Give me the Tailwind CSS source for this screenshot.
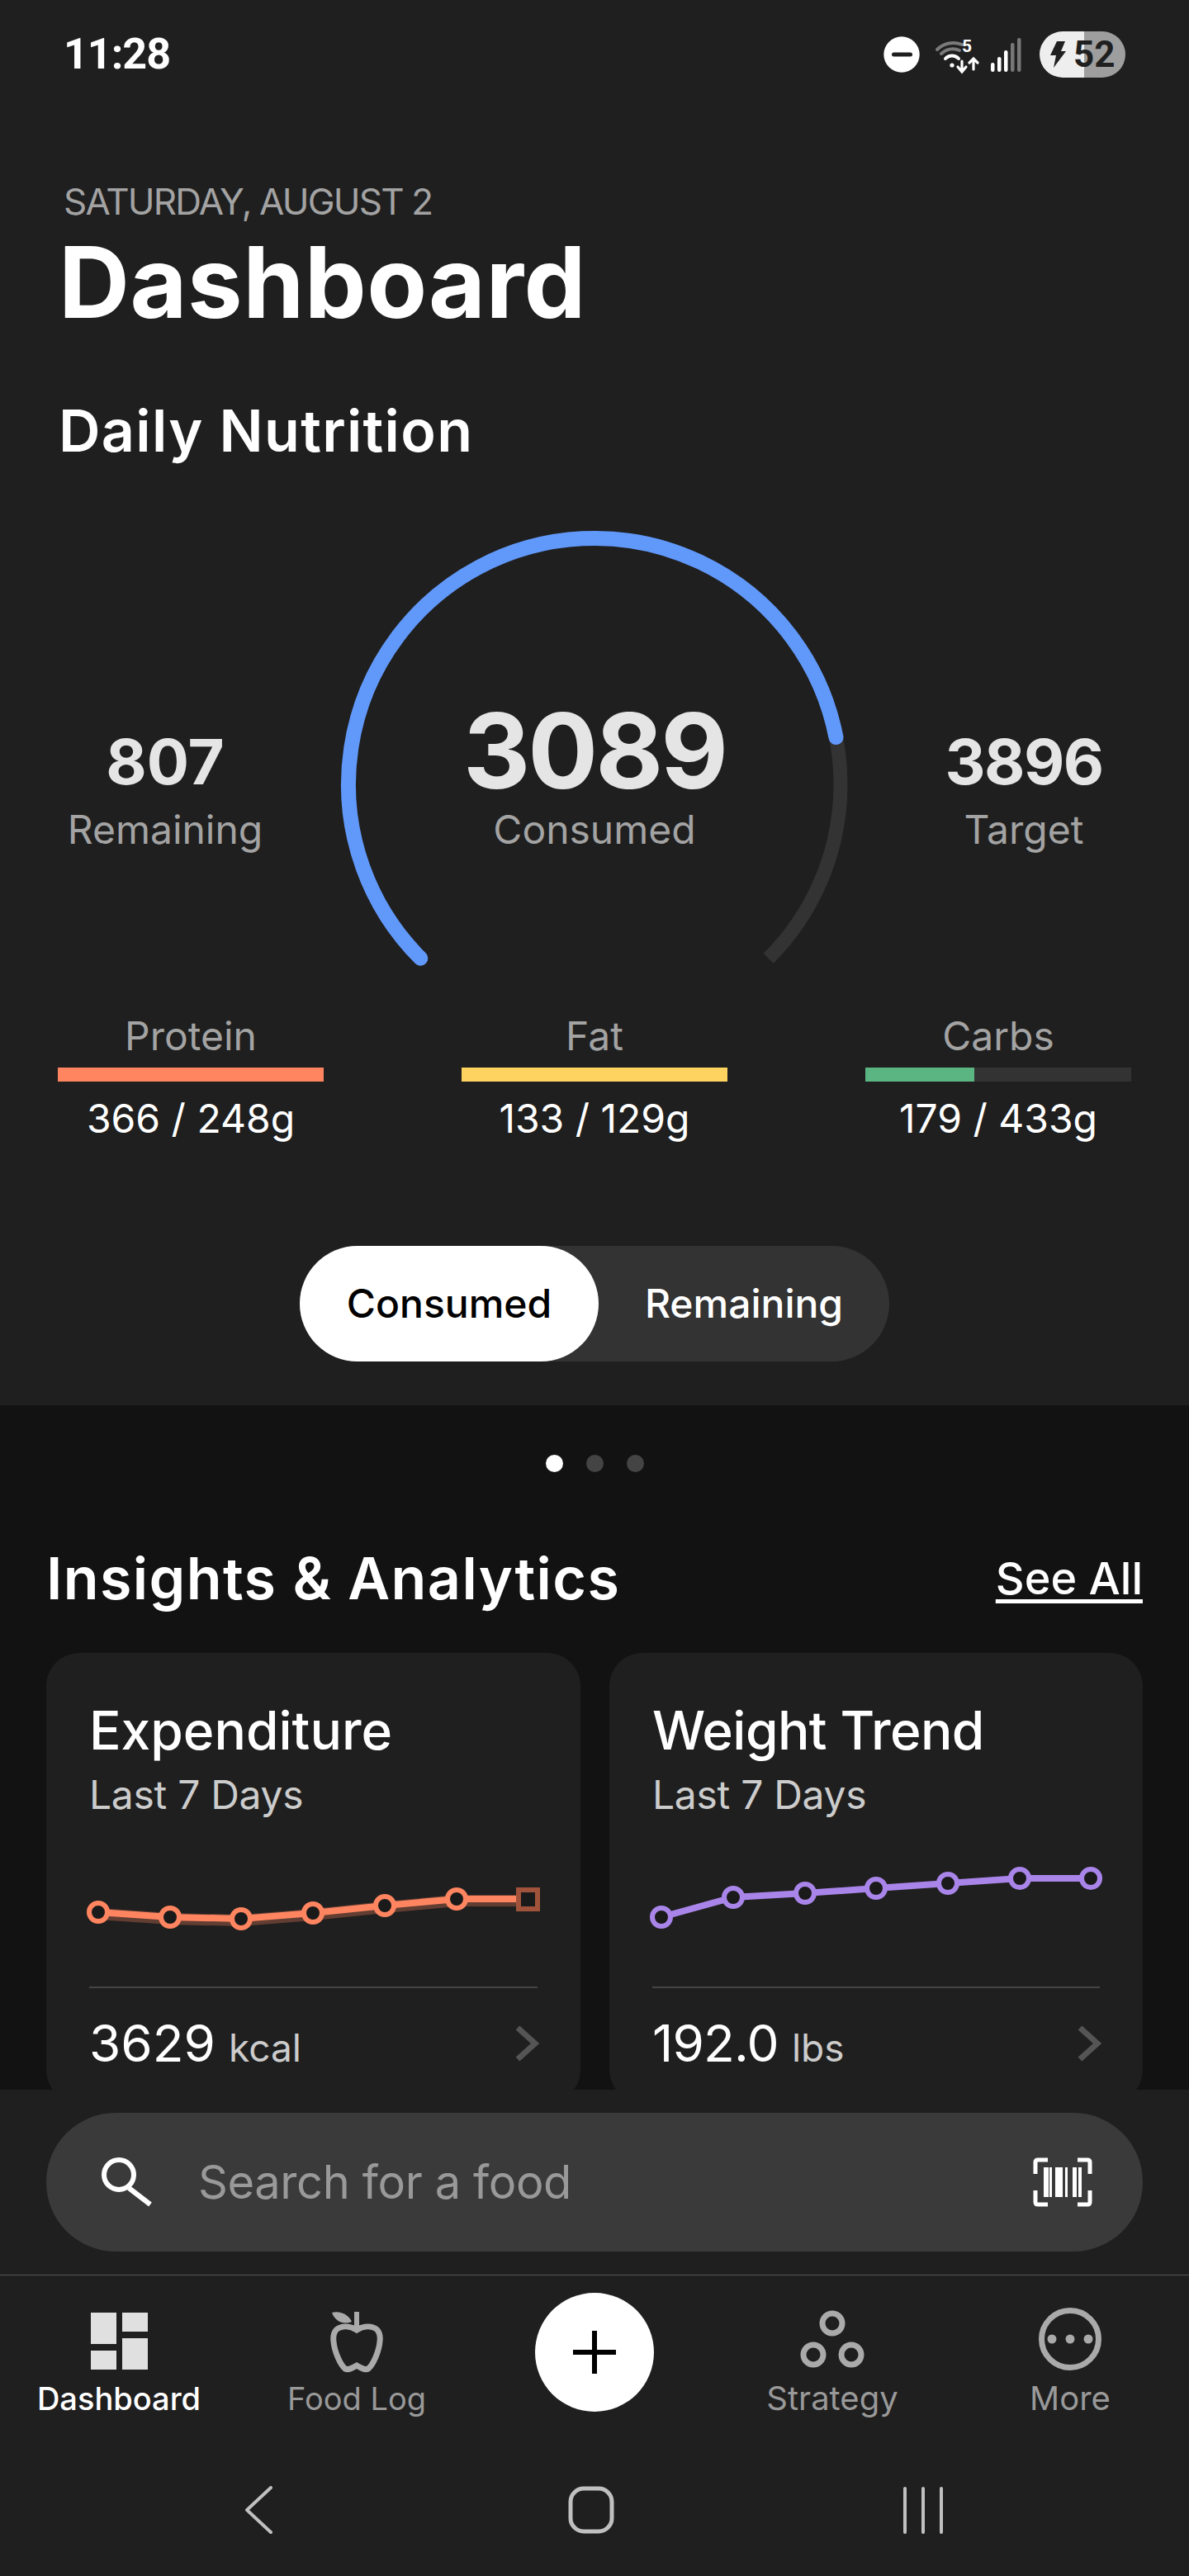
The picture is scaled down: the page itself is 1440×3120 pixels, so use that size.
<!DOCTYPE html>
<html lang="en">
<head>
  <meta charset="UTF-8">
  <meta name="viewport" content="width=device-width, initial-scale=1.0">
  <title>Dashboard</title>
  <script src="https://cdn.jsdelivr.net/npm/@tailwindcss/browser@4"></script>
</head>
<body class="bg-[#1f1f1f]">
<div class="w-[1440px] h-[3120px] flex flex-col overflow-hidden font-['Inter',sans-serif] text-white">

  <!-- top section -->
  <section class="h-[1702px] shrink-0 bg-[#1f1f1f]">
    <!-- status bar -->
    <div class="h-[132px] relative flex items-center pl-[77px] pr-[77px] justify-between">
      <span class="font-['Roboto',sans-serif] text-[52px] leading-none font-bold tracking-[-1px]">11:28</span>
      <div class="flex items-center">
        <svg class="w-[44px] h-[44px]" viewBox="0 0 44 44"><circle cx="22" cy="22" r="21.7" fill="#fff"/><rect x="10" y="19.5" width="25" height="5" rx="2.5" fill="#1f1f1f"/></svg>
        <div class="relative w-[62px] h-[50px] ml-[18px]">
          <svg class="w-[62px] h-[50px]" viewBox="0 0 62 50" fill="none" stroke-linecap="round">
            <path d="M3 19 A27.6 27.6 0 0 1 33 13" stroke="#7a7a7a" stroke-width="4"/>
            <path d="M8 24 A20 20 0 0 1 30 20" stroke="#7a7a7a" stroke-width="4"/>
            <path d="M13 30 A11 11 0 0 1 29 30" stroke="#fff" stroke-width="4"/>
            <circle cx="21" cy="38" r="2.6" fill="#fff"/>
            <path d="M33 33 V45 M28 40 L33 46 L38 40 M47 30 V43 M42 35 L47 30 L52 35" stroke="#fff" stroke-width="3.2"/>
          </svg>
          <span class="absolute left-[33px] top-[5px] font-['Roboto',sans-serif] text-[21px] leading-none font-bold">5</span>
        </div>
        <svg class="w-[40px] h-[42px] ml-[6px]" viewBox="0 0 40 42">
          <rect x="0" y="31" width="4.5" height="11" rx="2.2" fill="#fff"/>
          <rect x="8" y="24" width="4.5" height="18" rx="2.2" fill="#fff"/>
          <rect x="16" y="16" width="4.5" height="26" rx="2.2" fill="#fff"/>
          <rect x="24" y="7" width="4.5" height="35" rx="2.2" fill="#777"/>
          <rect x="32" y="1" width="4.5" height="41" rx="2.2" fill="#777"/>
        </svg>
        <div class="ml-[19px] w-[104px] h-[56px] rounded-full bg-[linear-gradient(90deg,#eeeeee_52%,#9e9e9e_52%)] flex items-center pl-[12px]">
          <svg class="w-[20px] h-[32px]" viewBox="0 0 20 32"><path d="M9 0 H19 L14 12 H20 L5 32 L8 17 H1 Z" fill="#1f1f1f"/></svg>
          <span class="ml-[9px] font-['Roboto',sans-serif] text-[44px] leading-none font-bold text-[#1f1f1f]">52</span>
        </div>
      </div>
    </div>

    <p class="mt-[90px] ml-[77px] text-[44px] leading-none text-[#a3a3a3] tracking-[-1.8px]">SATURDAY, AUGUST 2</p>
    <h1 class="mt-[17px] ml-[71px] text-[119px] leading-none font-bold tracking-[0.5px]">Dashboard</h1>
    <h2 class="mt-[85px] ml-[71px] text-[70px] leading-none font-semibold tracking-[1.3px]">Daily Nutrition</h2>

    <!-- gauge row -->
    <div class="flex h-[560px] mt-[83px]">
      <div class="w-[400px] pt-[244px] text-center">
        <div class="text-[76px] leading-none font-bold text-[#e5e5e5]">807</div>
        <div class="mt-[21px] text-[48px] leading-none text-[#a3a3a3]">Remaining</div>
      </div>
      <div class="w-[640px] relative pt-[206px] text-center">
        <svg class="absolute left-0 top-0 w-[640px] h-[560px]" viewBox="0 0 640 560" fill="none">
          <path d="M109.3 520.7 A298 298 0 1 1 530.7 520.7" stroke="#333333" stroke-width="17"/>
          <path d="M109.3 520.7 A298 298 0 1 1 612.5 253" stroke="#6199fb" stroke-width="18" stroke-linecap="round"/>
        </svg>
        <div class="relative text-[126px] leading-none font-bold text-[#e5e5e5] tracking-[-3px]">3089</div>
        <div class="relative mt-[9px] text-[48px] leading-none text-[#a3a3a3]">Consumed</div>
      </div>
      <div class="w-[400px] pt-[244px] text-center">
        <div class="text-[76px] leading-none font-bold text-[#e5e5e5] tracking-[-1.5px]">3896</div>
        <div class="mt-[21px] text-[48px] leading-none text-[#a3a3a3]">Target</div>
      </div>
    </div>

    <!-- macros -->
    <div class="flex justify-between px-[70px] mt-[31px]">
      <div class="w-[322px] text-center">
        <div class="text-[48px] leading-none text-[#a3a3a3]">Protein</div>
        <div class="mt-[14px] h-[17px] bg-[#ff8560]"></div>
        <div class="mt-[21px] text-[48px] leading-none">366 / 248g</div>
      </div>
      <div class="w-[322px] text-center">
        <div class="text-[48px] leading-none text-[#a3a3a3]">Fat</div>
        <div class="mt-[14px] h-[17px] bg-[#ffd35f]"></div>
        <div class="mt-[21px] text-[48px] leading-none">133 / 129g</div>
      </div>
      <div class="w-[322px] text-center">
        <div class="text-[48px] leading-none text-[#a3a3a3]">Carbs</div>
        <div class="mt-[14px] h-[17px] bg-[#333333]"><div class="h-full w-[41%] bg-[#5bb583]"></div></div>
        <div class="mt-[21px] text-[48px] leading-none">179 / 433g</div>
      </div>
    </div>

    <!-- toggle -->
    <div class="mt-[130px] mx-auto w-[714px] h-[140px] rounded-full bg-[#333333] flex text-[48px]">
      <div class="w-[362px] h-full rounded-full bg-white text-black font-medium flex items-center justify-center">Consumed</div>
      <div class="flex-1 flex items-center justify-center font-medium">Remaining</div>
    </div>
  </section>

  <!-- analytics section -->
  <section class="h-[829px] shrink-0 bg-[#121212] overflow-hidden">
    <div class="pt-[60px] flex justify-center gap-[28px]">
      <span class="w-[21px] h-[21px] rounded-full bg-white"></span>
      <span class="w-[21px] h-[21px] rounded-full bg-[#444444]"></span>
      <span class="w-[21px] h-[21px] rounded-full bg-[#444444]"></span>
    </div>
    <div class="mt-[94px] px-[56px] flex justify-between items-center">
      <h2 class="text-[70px] leading-none font-semibold tracking-[1.4px]">Insights &amp; Analytics</h2>
      <a class="text-[54px] leading-none font-medium underline underline-offset-[6px]">See All</a>
    </div>
    <div class="mt-[55px] px-[56px] flex justify-between">
      <!-- expenditure -->
      <div class="w-[647px] h-[545px] rounded-[40px] bg-[#1f1f1f] pt-[62px]">
        <div class="ml-[52px] text-[64px] leading-none font-medium">Expenditure</div>
        <div class="ml-[52px] mt-[22px] text-[48px] leading-none text-[#cccccc] tracking-[-0.3px]">Last 7 Days</div>
        <svg class="mt-[72px] block w-[647px] h-[70px] overflow-visible" viewBox="0 0 647 70" fill="none">
          <polyline points="63,48 150,54 236,56 323,49 410,40 497,32 583,32" stroke="#ff8560" stroke-opacity="0.3" stroke-width="14"/>
          <polyline points="63,46 150,52 236,54 323,47 410,38 497,30 583,30" stroke="#ff8560" stroke-width="8"/>
          <g fill="#1a1a1a" stroke="#ff8560" stroke-width="6">
            <circle cx="63" cy="46" r="11"/><circle cx="150" cy="52" r="11"/><circle cx="236" cy="54" r="11"/><circle cx="323" cy="47" r="11"/><circle cx="410" cy="38" r="11"/><circle cx="497" cy="30" r="11"/>
          </g>
          <rect x="572" y="19" width="23" height="23" fill="#1a1a1a" stroke="#a0533a" stroke-width="6"/>
        </svg>
        <div class="mx-[52px] mt-[66px] h-[2px] bg-[#444444]"></div>
        <div class="ml-[52px] mr-[49px] mt-[36px] flex items-baseline">
          <span class="text-[62px] leading-none">3629</span>
          <span class="ml-[16px] text-[46px] leading-none text-[#cccccc]">kcal</span>
          <svg class="ml-auto w-[32px] h-[44px] self-center" viewBox="0 0 32 44" fill="none"><path d="M5 3 L26 22 L5 41" stroke="#555555" stroke-width="7"/></svg>
        </div>
      </div>
      <!-- weight -->
      <div class="w-[646px] h-[545px] rounded-[40px] bg-[#1f1f1f] pt-[62px]">
        <div class="ml-[52px] text-[64px] leading-none font-medium tracking-[-0.6px]">Weight Trend</div>
        <div class="ml-[52px] mt-[22px] text-[48px] leading-none text-[#cccccc] tracking-[-0.3px]">Last 7 Days</div>
        <svg class="mt-[72px] block w-[646px] h-[70px] overflow-visible" viewBox="0 0 646 70" fill="none">
          <polyline points="63,52 150,28 237,23 323,17 410,11 497,5 583,5" stroke="#a985ea" stroke-width="8"/>
          <g fill="#1a1a1a" stroke="#a985ea" stroke-width="6">
            <circle cx="63" cy="52" r="11"/><circle cx="150" cy="28" r="11"/><circle cx="237" cy="23" r="11"/><circle cx="323" cy="17" r="11"/><circle cx="410" cy="11" r="11"/><circle cx="497" cy="5" r="11"/><circle cx="583" cy="5" r="11"/>
          </g>
        </svg>
        <div class="mx-[52px] mt-[66px] h-[2px] bg-[#444444]"></div>
        <div class="ml-[52px] mr-[49px] mt-[36px] flex items-baseline">
          <span class="text-[62px] leading-none tracking-[-0.8px]">192.0</span>
          <span class="ml-[16px] text-[46px] leading-none text-[#cccccc]">lbs</span>
          <svg class="ml-auto w-[32px] h-[44px] self-center" viewBox="0 0 32 44" fill="none"><path d="M5 3 L26 22 L5 41" stroke="#555555" stroke-width="7"/></svg>
        </div>
      </div>
    </div>
  </section>

  <!-- bottom panel -->
  <section class="flex-1 bg-[#1f1f1f] pt-[28px]">
    <div class="mx-[56px] h-[168px] rounded-full bg-[#3a3a3a] flex items-center pl-[64px] pr-[61px]">
      <svg class="w-[70px] h-[70px]" viewBox="0 0 70 70" fill="none" stroke="#fff" stroke-width="6"><circle cx="24" cy="26" r="18"/><path d="M36 42 L62 62"/></svg>
      <span class="ml-[50px] text-[56px] leading-none text-[#999999] tracking-[-0.4px]">Search for a food</span>
      <svg class="ml-auto w-[72px] h-[60px]" viewBox="0 0 72 60" fill="none">
        <path d="M18 3 H6 Q3 3 3 6 V20 M54 3 H66 Q69 3 69 6 V20 M3 40 V54 Q3 57 6 57 H18 M69 40 V54 Q69 57 66 57 H54" stroke="#fff" stroke-width="5"/>
        <g fill="#fff"><rect x="13" y="12" width="6" height="36"/><rect x="20" y="12" width="3" height="36"/><rect x="27" y="12" width="9" height="36"/><rect x="39" y="12" width="3" height="36"/><rect x="48" y="12" width="5" height="36"/><rect x="55" y="12" width="4" height="36"/></g>
      </svg>
    </div>
    <div class="mt-[28px] h-[1px] bg-[#555555]"></div>

    <!-- tab bar -->
    <nav class="grid grid-cols-5 h-[254px]">
      <div class="flex flex-col items-center pt-[40px]">
        <div class="h-[78px] flex items-center">
          <svg class="w-[69px] h-[69px]" viewBox="0 0 69 69" fill="#e0e0e0"><rect x="0" y="0" width="31" height="38"/><rect x="0" y="46" width="31" height="23"/><rect x="38" y="0" width="31" height="23"/><rect x="38" y="31" width="31" height="38"/></svg>
        </div>
        <span class="mt-[11px] text-[38px] leading-[40px] font-medium">Dashboard</span>
      </div>
      <div class="flex flex-col items-center pt-[40px]">
        <svg class="w-[64px] h-[78px]" viewBox="0 0 64 78" fill="none">
          <path d="M32 26 C26 22 18 21 12 23 C5 25 3 32 4 40 C5 52 12 68 18 73 C22 75 27 72 32 69 C37 72 42 75 46 73 C52 68 59 52 60 40 C61 32 59 25 52 23 C46 21 38 22 32 26Z" stroke="#aaaaaa" stroke-width="7"/>
          <path d="M32 4 V26" stroke="#aaaaaa" stroke-width="6"/>
          <path d="M2 5 C12 2 23 8 26 16 C16 20 6 16 2 5Z" fill="#aaaaaa"/>
        </svg>
        <span class="mt-[11px] text-[38px] leading-[40px] text-[#999999]">Food Log</span>
      </div>
      <div class="flex flex-col items-center pt-[21px]">
        <div class="w-[144px] h-[144px] rounded-full bg-white flex items-center justify-center">
          <svg class="w-[52px] h-[52px]" viewBox="0 0 52 52" fill="none" stroke="#000" stroke-width="6"><path d="M0 26 H52 M26 0 V52"/></svg>
        </div>
      </div>
      <div class="flex flex-col items-center pt-[40px]">
        <svg class="w-[78px] h-[78px]" viewBox="0 0 78 78" fill="none" stroke="#aaaaaa" stroke-width="7"><circle cx="39" cy="18" r="12"/><circle cx="16" cy="56" r="12"/><circle cx="62" cy="56" r="12"/></svg>
        <span class="mt-[11px] text-[40px] leading-none text-[#999999]">Strategy</span>
      </div>
      <div class="flex flex-col items-center pt-[40px]">
        <svg class="w-[78px] h-[78px] -mt-[2px] mb-[2px]" viewBox="0 0 78 78" fill="none"><circle cx="39" cy="39" r="34.5" stroke="#aaaaaa" stroke-width="7"/><g fill="#aaaaaa"><circle cx="17" cy="39" r="5.5"/><circle cx="39" cy="39" r="5.5"/><circle cx="61" cy="39" r="5.5"/></g></svg>
        <span class="mt-[11px] text-[40px] leading-none text-[#999999]">More</span>
      </div>
    </nav>

    <!-- system nav -->
    <div class="flex pl-[297px] mt-[1px]">
      <svg class="w-[34px] h-[58px]" viewBox="0 0 34 58" fill="none" stroke="#c0c0c0" stroke-width="4" stroke-linecap="round"><path d="M31 2 L2 29 L31 56"/></svg>
      <svg class="ml-[355px] w-[60px] h-[58px]" viewBox="0 0 60 58" fill="none" stroke="#c0c0c0" stroke-width="5"><rect x="5" y="3" width="50" height="52" rx="16"/></svg>
      <svg class="ml-[347px] w-[50px] h-[58px]" viewBox="0 0 50 58" fill="none" stroke="#c0c0c0" stroke-width="4" stroke-linecap="round"><path d="M3 3 V56 M25 3 V56 M47 3 V56"/></svg>
    </div>
  </section>
</div>
</body>
</html>
